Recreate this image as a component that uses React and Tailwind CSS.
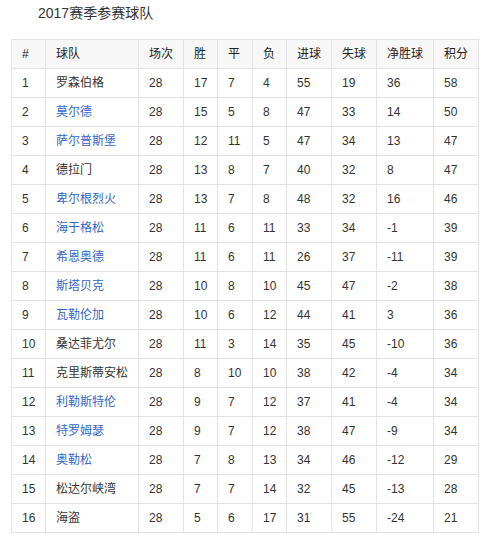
const teams = [
  ["1", "罗森伯格", false, 28, 17, 7, 4, 55, 19, 36, 58],
  ["2", "莫尔德", true, 28, 15, 5, 8, 47, 33, 14, 50],
  ["3", "萨尔普斯堡", true, 28, 12, 11, 5, 47, 34, 13, 47],
  ["4", "德拉门", false, 28, 13, 8, 7, 40, 32, 8, 47],
  ["5", "卑尔根烈火", true, 28, 13, 7, 8, 48, 32, 16, 46],
  ["6", "海于格松", true, 28, 11, 6, 11, 33, 34, -1, 39],
  ["7", "希恩奥德", true, 28, 11, 6, 11, 26, 37, -11, 39],
  ["8", "斯塔贝克", true, 28, 10, 8, 10, 45, 47, -2, 38],
  ["9", "瓦勒伦加", true, 28, 10, 6, 12, 44, 41, 3, 36],
  ["10", "桑达菲尤尔", false, 28, 11, 3, 14, 35, 45, -10, 36],
  ["11", "克里斯蒂安松", false, 28, 8, 10, 10, 38, 42, -4, 34],
  ["12", "利勒斯特伦", true, 28, 9, 7, 12, 37, 41, -4, 34],
  ["13", "特罗姆瑟", true, 28, 9, 7, 12, 38, 47, -9, 34],
  ["14", "奥勒松", true, 28, 7, 8, 13, 34, 46, -12, 29],
  ["15", "松达尔峡湾", false, 28, 7, 7, 14, 32, 45, -13, 28],
  ["16", "海盗", false, 28, 5, 6, 17, 31, 55, -24, 21],
];

const headers = ["#", "球队", "场次", "胜", "平", "负", "进球", "失球", "净胜球", "积分"];
const widths = ["w-[34px]", "w-[93px]", "w-[45px]", "w-[34px]", "w-[35px]", "w-[34px]", "w-[45px]", "w-[45px]", "w-[57px]", "w-[45px]"];

export default function App() {
  return (
    <div className="min-h-[539px] bg-white text-[#333] font-['Liberation_Sans','Noto_Sans_CJK_SC',sans-serif]">
      <div className="pl-[38px] h-[27px] pt-[3px] text-[14px] leading-[20px]">2017赛季参赛球队</div>
      <div className="pl-[11px] pt-[12px]">
        <table className="table-fixed border-collapse w-[468px] text-[12px]">
          <colgroup>
            {widths.map((w, i) => (
              <col key={i} className={w} />
            ))}
          </colgroup>
          <thead>
            <tr className="bg-[#f7f7f7]">
              {headers.map((h) => (
                <th
                  key={h}
                  className="h-[29px] border border-[#e3e3e3] pl-[10px] text-left font-normal text-[#222] leading-[14px] p-0"
                >
                  {h}
                </th>
              ))}
            </tr>
          </thead>
          <tbody>
            {teams.map((t) => (
              <tr key={t[0]}>
                {t.map((v, i) => {
                  if (i === 2) return null;
                  const blue = i === 1 && t[2];
                  return (
                    <td
                      key={i}
                      className={
                        "h-[29px] border border-[#e3e3e3] pl-[10px] leading-[14px] p-0 whitespace-nowrap " +
                        (blue ? "text-[#3366cc]" : "text-[#333]")
                      }
                    >
                      {v}
                    </td>
                  );
                })}
              </tr>
            ))}
          </tbody>
        </table>
      </div>
    </div>
  );
}
